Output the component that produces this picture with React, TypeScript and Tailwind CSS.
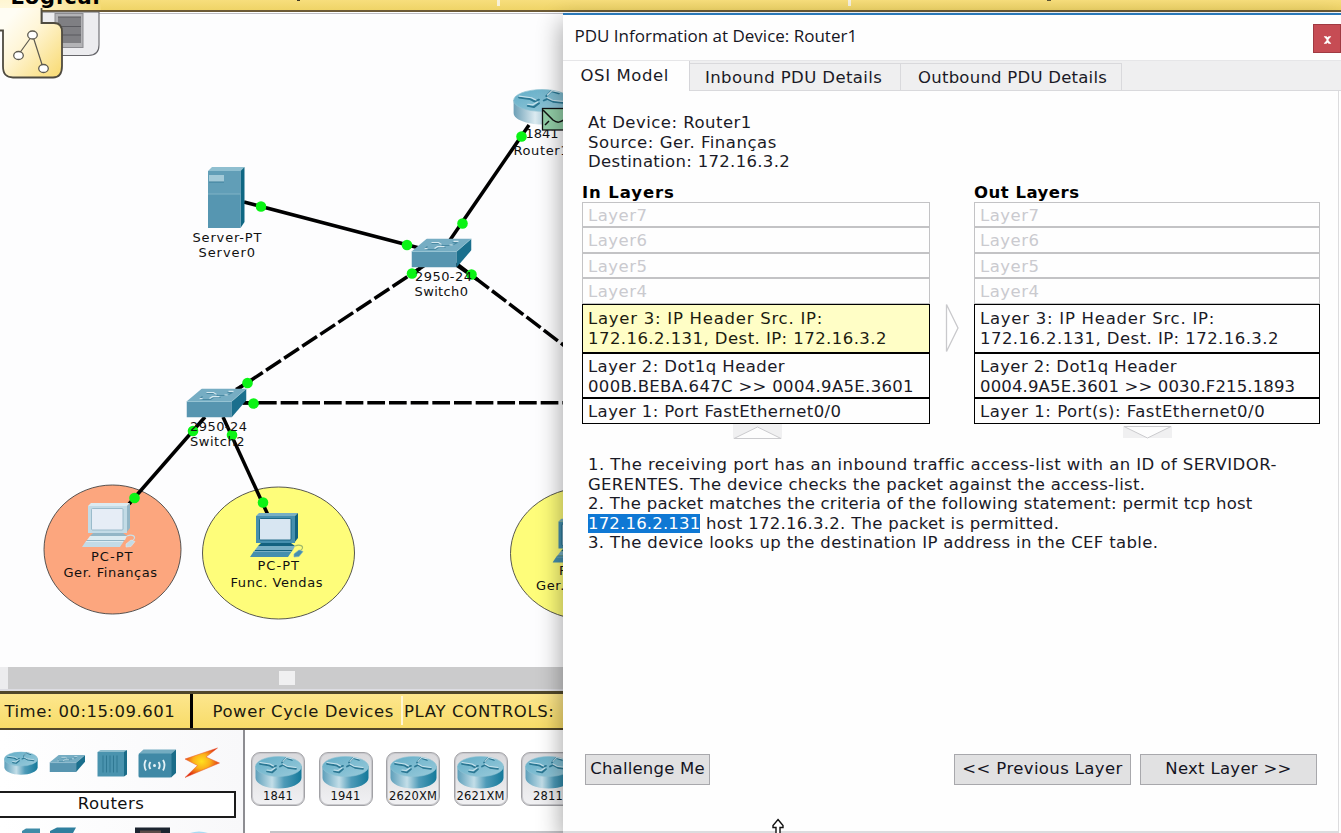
import React from "react";

const verdana = "font-['DejaVu_Sans',Verdana,sans-serif]";

/* ---------- device drawings ---------- */

function RouterGlyph({ x = 0, y = 0, w = 47, h = 33, flat = false }: { x?: number; y?: number; w?: number; h?: number; flat?: boolean }) {
  return (
    <svg x={x} y={y} width={w} height={h} viewBox="0 0 47 33" preserveAspectRatio="none" className="shrink-0">
      <defs>
        <linearGradient id="routerSide" x1="0" x2="1" y1="0" y2="0">
          <stop offset="0" stopColor="#5d9fba" />
          <stop offset="0.36" stopColor="#c3dee8" />
          <stop offset="0.62" stopColor="#4f9bb8" />
          <stop offset="1" stopColor="#14799a" />
        </linearGradient>
        <linearGradient id="routerSideFlat" x1="0" x2="1" y1="0" y2="0">
          <stop offset="0" stopColor="#6c9fb6" />
          <stop offset="0.38" stopColor="#dcebf1" />
          <stop offset="0.7" stopColor="#86b3c6" />
          <stop offset="1" stopColor="#6499b0" />
        </linearGradient>
        <linearGradient id="routerTop" x1="0" x2="1" y1="0" y2="1">
          <stop offset="0" stopColor="#62adc7" />
          <stop offset="1" stopColor="#9acbdb" />
        </linearGradient>
      </defs>
      <path d="M.5 10v12c0 5.800 10.300 10.500 23 10.500S46.500 27.800 46.500 22V10z" fill={flat ? "url(#routerSideFlat)" : "url(#routerSide)"} />
      <ellipse cx="23.500" cy="10.500" rx="23" ry="10" fill="url(#routerTop)" stroke="#8fc2d3" strokeWidth="0.600" />
      <g fill="none" strokeLinecap="round" strokeLinejoin="round">
        <path d="M5 7.800l9 1.500 3.500 2 3.500-1.500M41 12.800l-8-1-5-2.800-3 1.500M27 6.500l4-4.500 6 2M21 13l-4 3.500-5-1" stroke="#2b7793" strokeWidth="1.700" />
        <path d="M5 6.500l10 1.500 3.500 2M41 11.500l-9-1.200-4-2.300M28 5.500l3.500-4 6 1.500M20 12l-4 2.500-4-.5" stroke="#c6e1eb" strokeWidth="1.100" />
      </g>
    </svg>
  );
}

function SwitchGlyph({ x = 0, y = 0, w = 60, h = 29 }: { x?: number; y?: number; w?: number; h?: number }) {
  return (
    <svg x={x} y={y} width={w} height={h} viewBox="0 0 60 29" preserveAspectRatio="none" className="shrink-0">
      <path d="M0 13L15.500 0H60L45 13z" fill="#76adc3" />
      <path d="M0 13h45v16H0z" fill="#5795b0" />
      <path d="M45 13L60 0v11.500L45 29z" fill="#1a6f8d" />
      <path d="M0 13h45L60 0" fill="none" stroke="#9bc6d6" strokeWidth="0.800" />
      <path d="M14 11h10l3-2h7M20 5h8l3 2h9M41 4h5l-4 2M16 8l-3 2.500" fill="none" stroke="#4a8aa4" strokeWidth="1.200" />
      <path d="M13 10.200h3M23 10l3-1.800h7M20 4h7l3 2M38 6.500h3M42 2.800h5" fill="none" stroke="#d6e9f0" strokeWidth="1.200" />
    </svg>
  );
}

function PcGlyph({ x, y, pale = false }: { x: number; y: number; pale?: boolean }) {
  const front = pale ? "#c3dbe6" : "#458fae";
  const side = pale ? "#93b6c6" : "#12617f";
  const top = pale ? "#dcebf1" : "#78afc4";
  return (
    <svg x={x} y={y} width="56" height="46" viewBox="0 0 56 46">
      <path d="M6 3L9 0h39l-3 3z" fill={top} />
      <path d="M45 3l3-3v25l-4 5z" fill={side} />
      <path d="M6 3h39v27H6z" fill={front} />
      <rect x="9.500" y="5.500" width="31.500" height="21.500" rx="1" fill={pale ? "#e6edf6" : "#d8e6f2"} stroke={side} strokeWidth="0.900" />
      <path d="M11 30h30l4 3H8z" fill={side} />
      <path d="M8 33h37l-2 4H5z" fill={top} />
      <path d="M5 37h38l-3 2H4z" fill={side} />
      <path d="M4 38h38l-4 6H0z" fill={front} />
      <path d="M4 38.500h37" stroke={top} />
      <path d="M45 33c5-2 9 0 7 3-1.500 2-4 3-4 4" fill="none" stroke={pale ? "#c9dfe8" : "#9fb86a"} strokeWidth="1.200" />
      <path d="M44 41l5-4 4 1.500-4 5-5 .5z" fill={front} stroke={top} strokeWidth="0.600" />
    </svg>
  );
}

function ServerGlyph() {
  return (
    <g>
      <path d="M208 171l4-4h32.500l-4 4z" fill="#8fbfd0" />
      <path d="M240.500 171l4-4v55l-4 6z" fill="#0f6783" />
      <path d="M208 171h32.500v57H208z" fill="#5696b1" />
      <path d="M208 171h32.500v23H208z" fill="#619eb7" />
      <path d="M208 194h32.500" stroke="#80b3c6" />
      <path d="M209 175h15v7h-15z" fill="#a3cad8" />
      <path d="M209 182h15" stroke="#3d7f9b" />
    </g>
  );
}

type LabelSpec = { t: string; x: number; y: number; w: number };
const labels: LabelSpec[] = [
  { t: "1841", x: 525.5, y: 138, w: 33 },
  { t: "Router1", x: 513.5, y: 155, w: 55 },
  { t: "Server-PT", x: 192.5, y: 242, w: 69 },
  { t: "Server0", x: 198.5, y: 257, w: 56.5 },
  { t: "2950-24", x: 415, y: 281, w: 57 },
  { t: "Switch0", x: 414.5, y: 296, w: 53.5 },
  { t: "2950-24", x: 190, y: 431, w: 57 },
  { t: "Switch2", x: 190, y: 446, w: 54.5 },
  { t: "PC-PT", x: 91, y: 561, w: 41.5 },
  { t: "Ger. Finanças", x: 63.5, y: 576.5, w: 93.5 },
  { t: "PC-PT", x: 257.5, y: 570, w: 41.5 },
  { t: "Func. Vendas", x: 230.5, y: 587, w: 92 },
  { t: "PC-PT", x: 559, y: 575, w: 41.5 },
  { t: "Ger. Vendas", x: 536, y: 590, w: 84 },
];

const dots: [number, number][] = [
  [521.5, 136.5], [462.5, 223.5], [261, 206.5], [407, 245], [412, 273.5], [471.5, 274.5],
  [247.500, 383], [253.500, 403.5], [193, 431], [232, 435], [134.500, 498], [263, 502.5],
];

function Topology() {
  return (
    <svg width="563" height="653" viewBox="0 14 563 653" className="block">
      <g stroke="#444" strokeWidth="0.900">
        <ellipse cx="112.500" cy="549.500" rx="68.500" ry="64.500" fill="#fca67e" />
        <ellipse cx="278.500" cy="553" rx="76" ry="66" fill="#fefd7a" />
        <ellipse cx="586.500" cy="553.500" rx="76" ry="66" fill="#fefd7a" />
      </g>
      <g stroke="#000" strokeWidth="3.500" fill="none">
        <path d="M244 202L425 249.500" />
        <path d="M450 240L529 125" />
        <path d="M205 417L129 504" />
        <path d="M223 417L268 515" />
        <path d="M236 389.500L252 380" />
        <path d="M420 268.500L410 275" />
        <path d="M455 264L478 280" />
        <path d="M243 403h16" />
        <g strokeDasharray="17.700 3.970">
          <path d="M425.400 264.800L240 387.500" />
          <path d="M457.500 264.500L566 347" />
          <path d="M237.300 402.700H563" />
        </g>
      </g>
      <RouterGlyph x={513} y={89} w={58} h={36} flat />
      <ServerGlyph />
      <SwitchGlyph x={411.500} y={238.500} />
      <SwitchGlyph x={186.500} y={388.500} />
      <PcGlyph x={82} y={503} pale />
      <PcGlyph x={250} y={513} />
      <PcGlyph x={552.500} y={518.500} />
      <g fill="#0bf315">
        {dots.map(([cx, cy]) => <circle key={`${cx}-${cy}`} cx={cx} cy={cy} r="5.300" />)}
      </g>
      <g fill="#111" className="font-['DejaVu_Sans',Verdana,sans-serif] text-[13px]">
        {labels.map((l) => (
          <text key={`${l.x}-${l.y}`} x={l.x} y={l.y} textLength={l.w} lengthAdjust="spacing">{l.t}</text>
        ))}
      </g>
      <g stroke="#111" strokeWidth="1.300">
        <rect x="542.500" y="108.500" width="32" height="21.500" fill="#93cfa8" />
        <path d="M543 110l10 10c4 3 7 3 12-1M545 125l4-4" fill="none" strokeWidth="1.500" />
      </g>
    </svg>
  );
}

/* ---------- main window ---------- */

function TopBar() {
  return (
    <div className="relative h-3.5 shrink-0 overflow-visible border-b border-[#bdbdc4] bg-white">
      <div className="ml-[41px] h-[12px] overflow-hidden border-b-2 border-[#6c5a35] bg-linear-to-b from-[#f7de7c] to-[#efd467]" />
      <div className="absolute left-[41px] top-0 h-2.5 w-[60px] bg-linear-to-r from-[#fff3c4] to-[#f4da74]" />
      <div className="absolute left-0 top-0 h-[31px] w-[41px] bg-linear-to-b from-[#fff6d2] to-[#fffdf4]" />
      <div className="absolute left-[497px] top-0 h-1.5 w-[3px] bg-[#f7f1d8]" />
      <div className="absolute left-[848px] top-0 h-1.5 w-[3px] bg-[#f4f0e0]" />
      <div className="absolute left-[297px] top-0 h-px w-[3px] bg-[#3d3724]" />
      <div className="absolute left-[1047px] top-0 h-px w-[4px] bg-[#5b5335]" />
      <svg className="absolute left-0 top-0" width="110" height="84" viewBox="0 0 110 84">
        <defs>
          <linearGradient id="tabYellow" x1="0.100" y1="0.200" x2="0.900" y2="1">
            <stop offset="0" stopColor="#fffdf4" />
            <stop offset="0.350" stopColor="#fff6d8" />
            <stop offset="1" stopColor="#f9dc78" />
          </linearGradient>
        </defs>
        <path d="M42 12h57v33q0 10.500-10.500 10.500H42z" fill="#ececef" stroke="#66666b" strokeWidth="1.100" />
        <rect x="55" y="13.500" width="28" height="34" fill="#b3b3b6" stroke="#8b8b90" />
        <rect x="58" y="17" width="23" height="26" fill="#7f7f83" />
        <path d="M58 17h23M58 26.500h23M58 35h23" stroke="#5a5a5f" />
        <path d="M0 8h41.500v15H54q8 0 8 9v34q0 11.500-9 11.500H13q-10 0-10-11V30.500H0z" fill="url(#tabYellow)" />
        <path d="M41.500 8v15H54q8 0 8 9v34q0 11.500-9 11.500H13q-10 0-10-11V30.500H0" fill="none" stroke="#4f4b40" strokeWidth="1.800" />
        <path d="M20 52.500L30.500 38M33.500 38l9 28" stroke="#5d5a50" strokeWidth="1.200" />
        <g fill="#fff" stroke="#5d5a50" strokeWidth="1.300">
          <ellipse cx="32.500" cy="35" rx="4.800" ry="4" />
          <ellipse cx="18.500" cy="55.500" rx="4.800" ry="4" />
          <ellipse cx="43.500" cy="68.500" rx="4.800" ry="4" />
        </g>
      </svg>
      <div className="absolute left-[10.5px] top-[-15px] text-[21px] leading-6 font-bold tracking-[0.9px] text-black">Logical</div>
    </div>
  );
}

function StatusBar() {
  return (
    <div className="flex h-[39px] shrink-0 border-t-[3px] border-b-2 border-[#50472a] bg-linear-to-b from-[#fde68d] to-[#f7dc68] text-[16.5px] leading-[35px] whitespace-nowrap text-[#1c1a10]">
      <div className="w-[193px] border-r-[3px] border-black pl-[4.5px] tracking-[0.48px]">Time: 00:15:09.601</div>
      <div className="w-[208px] pl-[19.5px] tracking-[0.57px]">Power Cycle Devices</div>
      <div className="mt-0.5 h-[29px] w-[2px] bg-[#fff6d4]" />
      <div className="pl-px tracking-[0.65px]">PLAY CONTROLS:</div>
    </div>
  );
}

const models = ["1841", "1941", "2620XM", "2621XM", "2811"];

function DevicePalette() {
  return (
    <div className="flex min-h-0 flex-1 overflow-hidden bg-white">
      <div className="flex w-[245px] shrink-0 flex-col border-r-2 border-[#8d8d92] bg-linear-to-r from-white to-[#f8f8fa]">
        <svg width="243" height="61" viewBox="0 730 243 61" className="shrink-0">
          <RouterGlyph x={4} y={751.500} w={34} h={23.500} />
          <SwitchGlyph x={49.500} y={755} w={35.500} h={17} />
          <path d="M97.500 752l3-2H127l-2 2z" fill="#8dbdcd" />
          <path d="M97.500 752H124v24.500H97.500z" fill="#4a93ae" />
          <path d="M124 752l3-2v24.500l-3 2z" fill="#1b6c88" />
          <path d="M103 755.500v17M106.500 755.500v17M110 755.500v17M113.500 755.500v17M117 755.500v17" stroke="#2f7893" strokeWidth="1" />
          <path d="M138.500 754l5-4.500H176l-4.500 4.500z" fill="#74acc1" />
          <path d="M171 754l5-4.500V773l-5 4.500z" fill="#1a6c89" />
          <rect x="138.500" y="753.500" width="33" height="24" rx="1.500" fill="#4089a6" />
          <g fill="none" stroke="#e4f1f6" strokeWidth="1.800">
            <path d="M146 760q-3 5 0 10.500M150.500 762q-2.500 3.500 0 7M163 760q3 5 0 10.500M158.500 762q2.500 3.500 0 7" />
          </g>
          <circle cx="154.500" cy="765.500" r="1.500" fill="#e4f1f6" />
          <defs>
            <radialGradient id="bolt" cx="0.480" cy="0.450" r="0.550">
              <stop offset="0" stopColor="#ffe11e" />
              <stop offset="0.450" stopColor="#fbb01a" />
              <stop offset="1" stopColor="#de2a12" />
            </radialGradient>
          </defs>
          <path d="M217.500 748l-32.500 11 12.500 6.500L185 777.500l34.500-14.500-13.500-6z" fill="url(#bolt)" stroke="#e8552a" strokeWidth="0.500" />
        </svg>
        <div className="-ml-0.5 flex h-[27px] w-[238px] shrink-0 items-center justify-center border-2 border-[#1b1b1b] bg-white pr-3 text-[16.5px] tracking-[0.45px] text-[#111]">Routers</div>
        <svg width="243" height="15" viewBox="0 818 243 15" className="shrink-0">
          <path d="M22 831l4-2.500h14V833H22z" fill="#3f8ba7" />
          <path d="M50 831l7-3.500h19l-3 5.500H50z" fill="#2f7f9e" />
          <path d="M135 827.500h35v5.500h-35z" fill="#1c2530" />
          <path d="M140 830.500h21v2.500h-21z" fill="#5b4a48" />
          <path d="M190 833q9-3 18 0z" fill="#a8daf2" />
        </svg>
      </div>
      <div className="flex min-w-0 flex-1 flex-col justify-between pt-[22px]">
        <div className="flex gap-[13.5px] pl-1.5">
          {models.map((name) => (
            <div key={name} className="flex h-[54px] w-[54px] shrink-0 flex-col items-center rounded-[9px] border border-[#a2a2a6] bg-linear-to-b from-[#d9d9dc] to-[#f1f1f3] pt-[3px] shadow-[inset_0_0_0_1px_#c8c8cc]">
              <svg width="47" height="33" viewBox="0 0 47 33" className="shrink-0"><RouterGlyph /></svg>
              <span className="text-[11.5px] leading-[15px] tracking-[0.15px] text-[#111]">{name}</span>
            </div>
          ))}
        </div>
        <div className="ml-[25px] h-0.5 bg-[#c4c4c8]" />
      </div>
    </div>
  );
}

/* ---------- PDU dialog ---------- */

const body = "block whitespace-nowrap";

type Layer = { lines: [string, string][]; h: string; tone: string };

const emptyLayers: Layer[] = [
  { lines: [["Layer7", "tracking-[0.5px]"]], h: "h-[25px] pt-[3px]", tone: "border-[#c3c3c5] text-[#cacacf]" },
  { lines: [["Layer6", "tracking-[0.5px]"]], h: "h-[26px] pt-[3px]", tone: "border-[#c3c3c5] text-[#cacacf]" },
  { lines: [["Layer5", "tracking-[0.5px]"]], h: "h-[25px] pt-[3px]", tone: "border-[#c3c3c5] text-[#cacacf]" },
  { lines: [["Layer4", "tracking-[0.5px]"]], h: "h-[26px] pt-[3px]", tone: "border-[#c3c3c5] text-[#cacacf]" },
];

const inLayers: Layer[] = [
  ...emptyLayers,
  {
    lines: [["Layer 3: IP Header Src. IP:", "tracking-[0.75px]"], ["172.16.2.131, Dest. IP: 172.16.3.2", "tracking-[0.44px]"]],
    h: "h-[49px] pt-[4px]", tone: "border-black bg-[#fffec6] text-[#1c1c10]",
  },
  {
    lines: [["Layer 2: Dot1q Header", "tracking-[0.42px]"], ["000B.BEBA.647C >> 0004.9A5E.3601", "tracking-[0.32px]"]],
    h: "h-[45px] pt-[3px]", tone: "border-black text-[#1a1a26]",
  },
  { lines: [["Layer 1: Port FastEthernet0/0", "tracking-[0.42px]"]], h: "h-[26px] pt-[3px]", tone: "border-black text-[#1a1a26]" },
];

const outLayers: Layer[] = [
  ...emptyLayers,
  {
    lines: [["Layer 3: IP Header Src. IP:", "tracking-[0.75px]"], ["172.16.2.131, Dest. IP: 172.16.3.2", "tracking-[0.44px]"]],
    h: "h-[49px] pt-[4px]", tone: "border-black text-[#1a1a26]",
  },
  {
    lines: [["Layer 2: Dot1q Header", "tracking-[0.42px]"], ["0004.9A5E.3601 >> 0030.F215.1893", "tracking-[0.14px]"]],
    h: "h-[45px] pt-[3px]", tone: "border-black text-[#1a1a26]",
  },
  { lines: [["Layer 1: Port(s): FastEthernet0/0", "tracking-[0.51px]"]], h: "h-[26px] pt-[3px]", tone: "border-black text-[#1a1a26]" },
];

function LayerStack({ title, titleClass, layers, width }: { title: string; titleClass: string; layers: Layer[]; width: string }) {
  return (
    <div className={`shrink-0 ${width}`}>
      <div className={`h-[19px] leading-[20px] font-bold text-black ${titleClass}`}>{title}</div>
      {layers.map((l) => (
        <div key={l.lines[0][0]} className={`border pl-[5px] leading-[19.5px] ${l.h} ${l.tone}`}>
          {l.lines.map(([t, cls]) => <span key={t} className={`${body} ${cls}`}>{t}</span>)}
        </div>
      ))}
    </div>
  );
}

const btn = "flex h-[31px] items-center justify-center border border-[#a8a8ac] bg-[#e1e1e2] whitespace-nowrap text-[#14141f]";

function PduDialog() {
  return (
    <div className="absolute left-[563px] top-[13px] flex h-[820px] w-[778px] flex-col border-t-2 border-[#2a78b8] bg-[#fefefe] text-[16.5px] shadow-[-3px_8px_22px_rgba(0,0,0,0.32)]">
      <div className="flex h-[45px] shrink-0 items-start justify-between pl-[11.5px]">
        <div className="pt-[9px] font-['Open_Sans','Noto_Sans',sans-serif] text-[17px] leading-[24px] text-[#15151f]">PDU Information at Device: Router1</div>
        <button className="mt-[9px] flex h-[29px] w-[28px] items-center justify-center border border-[#a03a42] bg-[#c64c54]">
          <svg width="9" height="8" viewBox="0 0 10 9" className="mt-0.5"><path d="M1 .8h2.600L5 3l1.500-2.200H9M1 8.200h2.600L5 6l1.500 2.200H9M2.300 1l5.400 7M7.700 1L2.300 8" fill="none" stroke="#fff" strokeWidth="1.300" /></svg>
        </button>
      </div>
      <div className="flex h-[31px] shrink-0 border-t border-[#e6e6e8] bg-[#efeff0] text-[#1a1a26]">
        <div className="w-[127px] border-r border-[#d5d5d9] bg-[#fefefe] pl-[17.5px] leading-[30px] tracking-[0.6px]">OSI Model</div>
        <div className="mt-0.5 w-[211px] border-t border-r border-b border-[#d9d9dc] pl-[15px] leading-[28px] tracking-[0.4px]">Inbound PDU Details</div>
        <div className="mt-0.5 w-[221px] border-t border-r border-b border-[#d9d9dc] pl-[17px] leading-[28px] tracking-[0.24px]">Outbound PDU Details</div>
        <div className="flex-1 border-b border-[#d9d9dc]" />
      </div>
      <div className="mr-[2px] flex min-h-0 flex-1 flex-col border-r border-b-2 border-[#dcdcde] pl-[19px] text-[#1a1a26]">
        <div className="mt-[22px] h-[70px] pl-[6px] leading-[19.5px]">
          <span className={`${body} tracking-[0.48px]`}>At Device: Router1</span>
          <span className={`${body} tracking-[0.52px]`}>Source: Ger. Finanças</span>
          <span className={`${body} tracking-[0.32px]`}>Destination: 172.16.3.2</span>
        </div>
        <div className="flex">
          <LayerStack title="In Layers" titleClass="tracking-[0.9px]" layers={inLayers} width="w-[348px]" />
          <div className="flex w-[44px] shrink-0 items-start pt-[120px] pl-[15px]">
            <svg width="16" height="50" viewBox="0 0 16 50"><path d="M1.500 1.500L13 25 1.500 48.500z" fill="#fff" stroke="#c9c9cc" strokeWidth="1.300" /></svg>
          </div>
          <LayerStack title="Out Layers" titleClass="tracking-[0.5px]" layers={outLayers} width="w-[346px]" />
        </div>
        <div className="flex h-[31px] shrink-0 pl-[151px]">
          <svg width="50" height="16" viewBox="0 0 50 16"><path d="M0 0h49v15H0z" fill="#f0f0f1" /><path d="M1 14.500L24.500 3 48 14.500z" fill="#fdfdfd" stroke="#cbcbce" /></svg>
          <svg width="50" height="16" viewBox="0 0 50 16" className="ml-[340px]"><path d="M0 2h49v12H0z" fill="#f0f0f1" /><path d="M1 2.500L24.500 14 48 2.500z" fill="#fdfdfd" stroke="#cbcbce" /></svg>
        </div>
        <div className="h-[299px] shrink-0 pl-[6px] leading-[19.5px]">
          <span className={`${body} tracking-[0.43px]`}>1. The receiving port has an inbound traffic access-list with an ID of SERVIDOR-</span>
          <span className={`${body} tracking-[0.295px]`}>GERENTES. The device checks the packet against the access-list.</span>
          <span className={`${body} tracking-[0.255px]`}>2. The packet matches the criteria of the following statement: permit tcp host</span>
          <span className={`${body} tracking-[0.275px]`}><span className="bg-[#0f78d4] tracking-[0.18px] text-white">172.16.2.131</span> host 172.16.3.2. The packet is permitted.</span>
          <span className={`${body} tracking-[0.345px]`}>3. The device looks up the destination IP address in the CEF table.</span>
        </div>
        <div className="flex items-center pl-[3px]">
          <button className={`${btn} w-[125px] tracking-[0.2px]`}>Challenge Me</button>
          <button className={`${btn} ml-auto w-[177px] tracking-[0.38px]`}>&lt;&lt; Previous Layer</button>
          <button className={`${btn} mr-[21px] ml-[9px] w-[177px] tracking-[0.3px]`}>Next Layer &gt;&gt;</button>
        </div>
      </div>
    </div>
  );
}

export default function App() {
  return (
    <div className={`relative flex h-[833px] w-[1341px] flex-col overflow-hidden bg-[#fdfdfe] ${verdana}`}>
      <TopBar />
      <div className="h-[653px] shrink-0"><Topology /></div>
      <div className="flex h-[22px] shrink-0 bg-[#ececee]">
        <div className="ml-2 h-full flex-1 bg-[#cbcbcc] pt-1 pl-[271px]"><div className="h-[14px] w-[16px] bg-[#f0f0f1]" /></div>
      </div>
      <div className="h-[2px] shrink-0 bg-[#dcdce2]" />
      <StatusBar />
      <DevicePalette />
      <PduDialog />
      <svg className="absolute left-[769px] top-[818px]" width="18" height="15" viewBox="0 0 18 15">
        <path d="M9 1.500L14 7.500v2H11V16H7V9.500H4v-2z" fill="#fff" stroke="#111" strokeWidth="1.400" />
      </svg>
    </div>
  );
}
